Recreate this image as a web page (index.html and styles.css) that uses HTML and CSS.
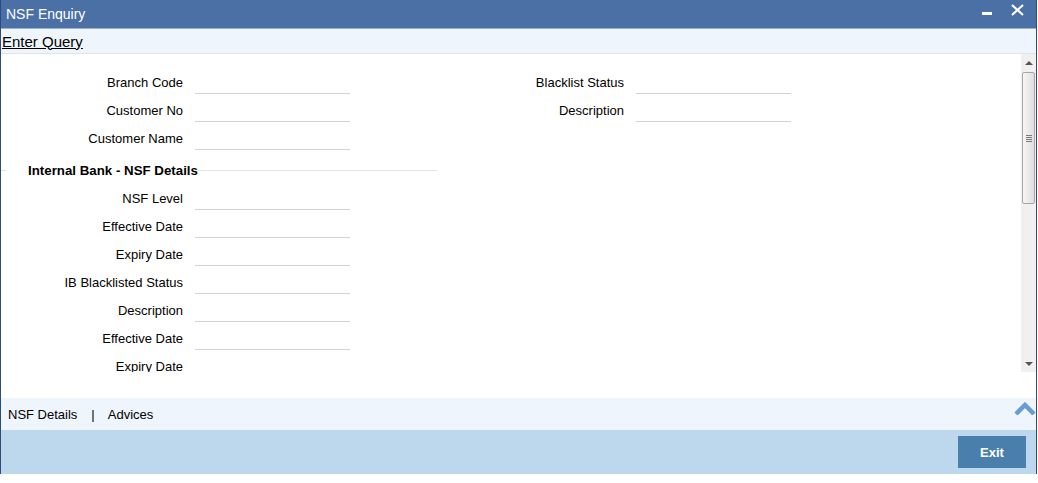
FILE: index.html
```html
<!DOCTYPE html>
<html>
<head>
    <title>NSF Enquiry</title>
    <link rel="stylesheet" href="styles.css">
</head>
<body>
    <div class="window">
        <div class="titlebar">
            <span class="title">NSF Enquiry</span>
            <div class="win-buttons">
                <span class="btn-min"></span>
                <svg class="btn-close" width="13" height="12" viewBox="0 0 13 12">
                    <path d="M1 1 L12 11 M12 1 L1 11" stroke="#fff" stroke-width="2.2" fill="none"/>
                </svg>
            </div>
        </div>

        <div class="toolbar">
            <a href="#" class="query">Enter Query</a>
        </div>

        <div class="main">
            <div class="scrollbox">
                <div class="content">
                    <div class="col col-left">
                        <div class="row"><label>Branch Code</label><input type="text"></div>
                        <div class="row"><label>Customer No</label><input type="text"></div>
                        <div class="row"><label>Customer Name</label><input type="text"></div>

                        <div class="section"><span>Internal Bank - NSF Details</span></div>

                        <div class="row"><label>NSF Level</label><input type="text"></div>
                        <div class="row"><label>Effective Date</label><input type="text"></div>
                        <div class="row"><label>Expiry Date</label><input type="text"></div>
                        <div class="row"><label>IB Blacklisted Status</label><input type="text"></div>
                        <div class="row"><label>Description</label><input type="text"></div>
                        <div class="row"><label>Effective Date</label><input type="text"></div>
                        <div class="row"><label>Expiry Date</label><input type="text"></div>
                    </div>
                    <div class="col col-right">
                        <div class="row"><label>Blacklist Status</label><input type="text"></div>
                        <div class="row"><label>Description</label><input type="text"></div>
                    </div>
                </div>

                <!-- 滚动条 -->
                <div class="scrollbar">
                    <div class="arrow arrow-up"></div>
                    <div class="thumb"><span class="grip"></span></div>
                    <div class="track"></div>
                    <div class="arrow arrow-down"></div>
                </div>
            </div>
        </div>

        <div class="tabs">
            <div class="tab-links">
                <a href="#">NSF Details</a>
                <span class="sep">|</span>
                <a href="#">Advices</a>
            </div>
            <svg class="collapse" width="22" height="13" viewBox="0 0 22 13">
                <polyline points="2,12 11,3 20,12" stroke="#6a9bd3" stroke-width="4.5" fill="none"/>
            </svg>
        </div>

        <div class="footer">
            <button class="exit">Exit</button>
        </div>
    </div>
</body>
</html>
```

FILE: styles.css
```css
body {
    margin: 0;
    font-family: "Liberation Sans", Arial, sans-serif;
    font-size: 13px;
    color: #000;
    background: #fff;
}
.window {
    width: 1035px;
    border-left: 1px solid #2c4b7a;
    border-right: 1px solid #2c4b7a;
    display: flex;
    flex-direction: column;
}
.titlebar {
    height: 28px;
    background: #4a70a6;
    border-bottom: 1px solid #9fb0c2;
    display: flex;
    align-items: center;
    justify-content: space-between;
    padding-left: 5px;
}
.title {
    color: #fff;
    font-size: 14px;
}
.win-buttons {
    display: flex;
    align-items: center;
    margin-right: 12px;
}
.btn-min {
    width: 10px;
    height: 3px;
    background: #fff;
    margin-top: -1px;
    margin-right: 19px;
}
.btn-close {
    display: block;
    margin-top: -8px;
}
.toolbar {
    height: 24px;
    background: #eef5fd;
    border-bottom: 1px solid #dfe4ea;
    display: flex;
    align-items: center;
    padding-left: 1px;
}
.query {
    color: #000;
    font-size: 15px;
    text-decoration: underline;
}
.main {
    height: 344px;
    background: #fff;
}
.scrollbox {
    height: 318px;
    display: flex;
    overflow: hidden;
}
.content {
    flex: 1;
    display: flex;
    padding-top: 14px;
}
.col-left {
    width: 436px;
}
.row {
    height: 28px;
    display: flex;
    align-items: center;
}
.row label {
    text-align: right;
    padding-right: 12px;
    flex-shrink: 0;
}
.col-left .row label {
    width: 182px;
}
.col-right .row label {
    width: 187px;
}
.row input {
    width: 155px;
    height: 24px;
    box-sizing: border-box;
    border: none;
    border-bottom: 1px solid #d2d2d2;
    padding: 0;
    margin: 0;
    background: transparent;
    font: inherit;
}
.section {
    height: 28px;
    padding-top: 4px;
    display: flex;
    align-items: center;
    font-weight: bold;
    font-size: 13.3px;
}
.section::before {
    content: "";
    width: 5px;
    border-top: 1px solid #e3e3e3;
    margin-right: 22px;
}
.section::after {
    content: "";
    flex: 1;
    border-top: 1px solid #e3e3e3;
}
.scrollbar {
    width: 15px;
    background: #f0f0f0;
    display: flex;
    flex-direction: column;
}
.arrow {
    height: 17px;
    position: relative;
}
.arrow::after {
    content: "";
    position: absolute;
    left: 4px;
    border-left: 4px solid transparent;
    border-right: 4px solid transparent;
}
.arrow-up::after {
    top: 7px;
    border-bottom: 4px solid #555;
}
.arrow-down::after {
    top: 7px;
    border-top: 4px solid #555;
}
.thumb {
    height: 130px;
    margin: 1px 1px 0 1px;
    border: 1px solid #a8a8a8;
    border-radius: 2px;
    background: linear-gradient(to right, #f6f6f6, #dedede);
    display: flex;
    align-items: center;
    justify-content: center;
}
.grip {
    width: 6px;
    height: 7px;
    background: repeating-linear-gradient(to bottom, #7a7a7a 0, #7a7a7a 1px, transparent 1px, transparent 2px);
}
.track {
    flex: 1;
}
.tabs {
    height: 32px;
    background: #eef5fd;
    display: flex;
    justify-content: space-between;
}
.tab-links {
    display: flex;
    align-items: center;
    padding-left: 7px;
}
.tab-links a {
    color: #000;
    text-decoration: none;
}
.sep {
    margin: 0 13px 0 14px;
}
.collapse {
    display: block;
    margin-top: 4px;
}
.footer {
    height: 44px;
    background: #bdd8ec;
    display: flex;
    justify-content: flex-end;
    align-items: flex-start;
}
.exit {
    width: 68px;
    height: 32px;
    margin-top: 6px;
    margin-right: 10px;
    border: none;
    background: #4a7fad;
    color: #fff;
    font-family: "Liberation Sans", Arial, sans-serif;
    font-size: 13px;
    font-weight: bold;
    cursor: pointer;
}
```
